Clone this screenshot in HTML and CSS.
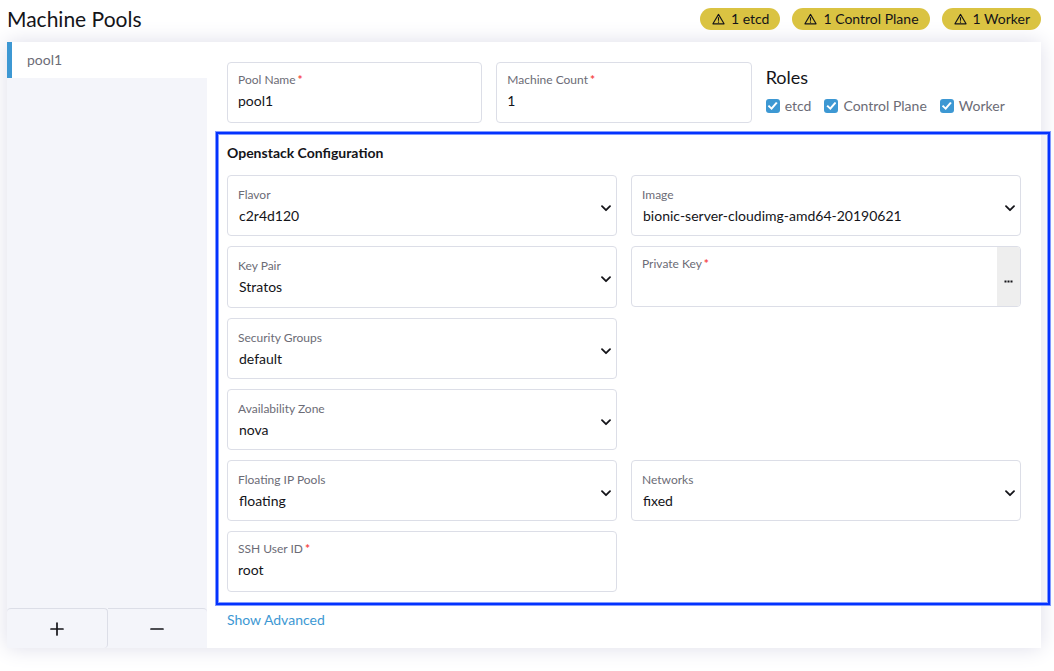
FILE: index.html
```html
<!DOCTYPE html>
<html lang="en">
<head>
<meta charset="utf-8">
<meta name="viewport" content="width=device-width, initial-scale=1">
<title>Machine Pools</title>
<link rel="stylesheet" href="styles.css">
</head>
<body>
<svg class="defs" width="0" height="0" aria-hidden="true">
  <symbol id="warn" viewBox="0 0 14 12"><path d="M7 1 13 11.2H1Z M7 4.2V8 M7 8.8V10" fill="none" stroke="currentColor" stroke-width="1.2" stroke-linejoin="round"/></symbol>
  <symbol id="chevron" viewBox="0 0 10 7"><path d="M1 1.2 5 5.2 9 1.2" fill="none" stroke="currentColor" stroke-width="1.8" stroke-linecap="round" stroke-linejoin="round"/></symbol>
</svg>
<main class="page">
  <header class="header">
    <h1 class="title">Machine Pools</h1>
    <div class="badges">
      <span class="badge"><svg class="badge-icon"><use href="#warn"/></svg>1 etcd</span>
      <span class="badge"><svg class="badge-icon"><use href="#warn"/></svg>1 Control Plane</span>
      <span class="badge"><svg class="badge-icon"><use href="#warn"/></svg>1 Worker</span>
    </div>
  </header>
  <div class="panel">
    <nav class="sidebar">
      <button class="tab" type="button">pool1</button>
      <div class="sidebar-actions">
        <button class="action" type="button" aria-label="Add pool"><svg width="14" height="14" viewBox="0 0 14 14"><path d="M7 1V13M1 7H13" stroke="currentColor" stroke-width="1.7" stroke-linecap="round"/></svg></button>
        <button class="action" type="button" aria-label="Remove pool"><svg width="14" height="14" viewBox="0 0 14 14"><path d="M1 7H13" stroke="currentColor" stroke-width="1.7" stroke-linecap="round"/></svg></button>
      </div>
    </nav>
    <form class="content">
      <div class="top-row">
        <div class="field">
          <label class="label" for="name">Pool Name<span class="required">*</span></label>
          <input class="control" id="name" type="text" value="pool1">
        </div>
        <div class="field">
          <label class="label" for="count">Machine Count<span class="required">*</span></label>
          <input class="control" id="count" type="text" value="1">
        </div>
        <div class="roles">
          <h2 class="roles-title">Roles</h2>
          <div class="checks">
            <label class="check"><input class="checkbox" type="checkbox" checked>etcd</label>
            <label class="check"><input class="checkbox" type="checkbox" checked>Control Plane</label>
            <label class="check"><input class="checkbox" type="checkbox" checked>Worker</label>
          </div>
        </div>
      </div>
      <section class="config">
        <h3 class="config-title">Openstack Configuration</h3>
        <div class="config-grid">
          <div class="field field-select">
            <label class="label" for="flavor">Flavor</label>
            <select class="control" id="flavor"><option>c2r4d120</option></select>
            <svg class="chevron"><use href="#chevron"/></svg>
          </div>
          <div class="field field-select">
            <label class="label" for="image">Image</label>
            <select class="control" id="image"><option>bionic-server-cloudimg-amd64-20190621</option></select>
            <svg class="chevron"><use href="#chevron"/></svg>
          </div>
          <div class="field field-select">
            <label class="label" for="keypair">Key Pair</label>
            <select class="control" id="keypair"><option>Stratos</option></select>
            <svg class="chevron"><use href="#chevron"/></svg>
          </div>
          <div class="field field-file">
            <div class="file-main">
              <label class="label" for="key">Private Key<span class="required">*</span></label>
              <input class="control" id="key" type="text">
            </div>
            <button class="browse" type="button" aria-label="Browse"><svg width="9" height="3" viewBox="0 0 9 3"><path d="M.5 .5h2v2h-2zM3.5 .5h2v2h-2zM6.5 .5h2v2h-2z" fill="currentColor"/></svg></button>
          </div>
          <div class="field field-select first-column">
            <label class="label" for="groups">Security Groups</label>
            <select class="control" id="groups"><option>default</option></select>
            <svg class="chevron"><use href="#chevron"/></svg>
          </div>
          <div class="field field-select first-column">
            <label class="label" for="zone">Availability Zone</label>
            <select class="control" id="zone"><option>nova</option></select>
            <svg class="chevron"><use href="#chevron"/></svg>
          </div>
          <div class="field field-select first-column">
            <label class="label" for="pools">Floating IP Pools</label>
            <select class="control" id="pools"><option>floating</option></select>
            <svg class="chevron"><use href="#chevron"/></svg>
          </div>
          <div class="field field-select">
            <label class="label" for="networks">Networks</label>
            <select class="control" id="networks"><option>fixed</option></select>
            <svg class="chevron"><use href="#chevron"/></svg>
          </div>
          <div class="field">
            <label class="label" for="ssh">SSH User ID<span class="required">*</span></label>
            <input class="control" id="ssh" type="text" value="root">
          </div>
        </div>
      </section>
      <a class="advanced" href="#">Show Advanced</a>
    </form>
  </div>
</main>
</body>
</html>
```

FILE: styles.css
```css
* {
  box-sizing: border-box;
}

body {
  margin: 0;
  background: #fff;
  color: #141419;
  font: 14px/20px Lato, sans-serif;
}

button,
input,
select {
  font: inherit;
  color: inherit;
}

.defs {
  position: absolute;
}

.page {
  padding: 0 13px 22px 7px;
}

.header {
  display: flex;
  justify-content: space-between;
  align-items: center;
  padding: 4px 0 8px;
}

.title {
  margin: 0;
  font-size: 21px;
  font-weight: 400;
  line-height: 30px;
}

.badges {
  display: flex;
  gap: 12px;
}

.badge {
  display: flex;
  align-items: center;
  gap: 6px;
  height: 22px;
  padding: 0 11px 0 12px;
  border-radius: 11px;
  background: #dac342;
}

.badge-icon {
  width: 13px;
  height: 12px;
}

.panel {
  display: flex;
  background: #fff;
  box-shadow: 0 0 20px #dddde9;
}

.sidebar {
  display: flex;
  flex-direction: column;
  justify-content: space-between;
  width: 200px;
  flex: none;
  background: #f4f5fa;
}

.tab {
  height: 36px;
  padding: 0 15px;
  border: 0;
  border-left: 5px solid #3d98d3;
  background: #fff;
  color: #6c6c76;
  text-align: left;
}

.sidebar-actions {
  display: flex;
}

.action {
  display: flex;
  flex: 1;
  align-items: center;
  justify-content: center;
  height: 40px;
  padding: 0;
  border: 0 solid #dcdee7;
  border-top-width: 1px;
  border-radius: 0 4px 4px 0;
  background: transparent;
}

.action:first-child {
  border-right-width: 1px;
  border-radius: 4px;
}

.content {
  flex: 1;
  min-width: 0;
  padding: 20px 20px 18px;
}

.top-row {
  display: grid;
  grid-template-columns: repeat(3, 1fr);
  gap: 14px;
}

.field {
  position: relative;
  display: flex;
  flex-direction: column;
  min-height: 61px;
  padding: 9px 10px;
  border: 1px solid #dcdee7;
  border-radius: 4px;
  background: #fff;
}

.field-select {
  padding-top: 11px;
}

.label {
  color: #6c6c76;
  font-size: 12px;
  line-height: 16px;
}

.required {
  margin-left: 2px;
  color: #f64747;
  font-weight: 700;
}

.control {
  width: 100%;
  height: 20px;
  margin-top: 3px;
  padding: 0;
  border: 0;
  outline: 0;
  appearance: none;
  background: transparent;
  line-height: 20px;
}

.field-select .control {
  padding-left: 1px;
}

.chevron {
  position: absolute;
  top: 29px;
  right: 5px;
  width: 10px;
  height: 7px;
  pointer-events: none;
}

.field-file {
  flex-direction: row;
  align-self: start;
  padding: 0;
  overflow: hidden;
}

.file-main {
  display: flex;
  flex: 1;
  flex-direction: column;
  padding: 9px 10px;
}

.browse {
  width: 23px;
  padding: 10px 0 0;
  border: 0;
  background: #eee;
}

.browse svg {
  display: block;
  margin: 0 auto;
}

.roles {
  padding-top: 4px;
  white-space: nowrap;
}

.roles-title {
  margin: 0;
  font-size: 18px;
  font-weight: 400;
  line-height: 22px;
}

.checks {
  display: flex;
  gap: 13px;
  padding-top: 8px;
}

.check {
  display: flex;
  align-items: center;
  gap: 5px;
  color: #6c6c76;
}

.checkbox {
  width: 14px;
  height: 14px;
  margin: 0;
  border-radius: 3px;
  appearance: none;
  background: #3d98d3;
}

.checkbox:checked {
  display: grid;
  place-items: center;
}

.checkbox:checked::before {
  content: "";
  width: 10px;
  height: 8px;
  background: #fff;
  clip-path: polygon(0 52%, 15% 38%, 37% 65%, 83% 0, 100% 14%, 40% 100%);
}

.config {
  position: relative;
  padding-top: 20px;
}

/* Outline round the provider settings, reaching past the panel edge */
.config::after {
  content: "";
  position: absolute;
  inset: 9px -29px -13px -11px;
  border: 2px solid #0433ff;
  box-shadow: 0 0 0 1px #8199ff, inset 0 0 0 1px #8199ff;
  pointer-events: none;
}

.config-title {
  margin: 0 0 12px;
  font-size: 14px;
  font-weight: 700;
  line-height: 20px;
}

.config-grid {
  display: grid;
  grid-template-rows: 61px 62px;
  grid-template-columns: repeat(2, 1fr);
  gap: 10px 14px;
}

.first-column {
  grid-column: 1;
}

.advanced {
  display: inline-block;
  margin-top: 18px;
  color: #3d98d3;
  text-decoration: none;
}
```
